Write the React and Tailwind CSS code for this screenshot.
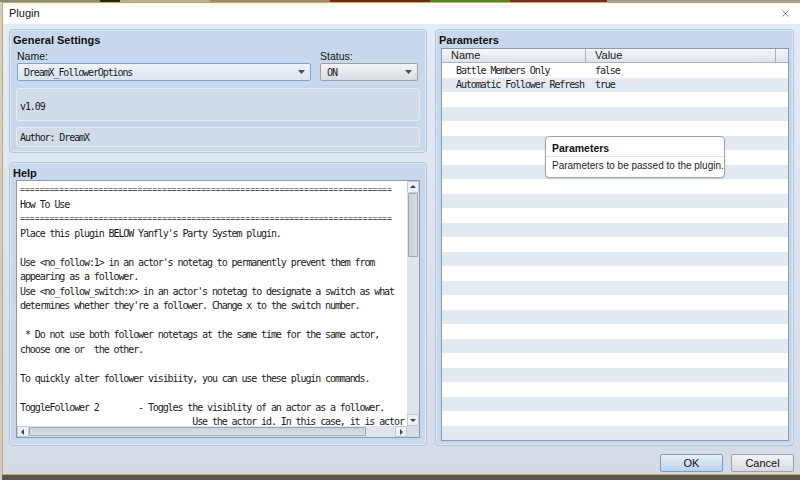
import { X } from 'lucide-react';

const mono = "font-['DejaVu_Sans_Mono',monospace] text-[10px] tracking-[-1.1px]";

const helpLines = [
  '============================================================================',
  'How To Use',
  '============================================================================',
  "Place this plugin BELOW Yanfly's Party System plugin.",
  '',
  "Use <no_follow:1> in an actor's notetag to permanently prevent them from",
  'appearing as a follower.',
  "Use <no_follow_switch:x> in an actor's notetag to designate a switch as what",
  "determines whether they're a follower. Change x to the switch number.",
  '',
  ' * Do not use both follower notetags at the same time for the same actor,',
  'choose one or  the other.',
  '',
  'To quickly alter follower visibiity, you can use these plugin commands.',
  '',
  'ToggleFollower 2        - Toggles the visiblity of an actor as a follower.',
  '                                   Use the actor id. In this case, it is actor',
];

const params = [
  { name: 'Battle Members Only', value: 'false' },
  { name: 'Automatic Follower Refresh', value: 'true' },
];

const rows = Array.from({ length: 26 }, (_, i) => params[i] || null);

const Arrow = ({ dir }) => {
  const paths = {
    up: 'M1 5 L4 2 L7 5 Z',
    down: 'M1 3 L4 6 L7 3 Z',
    left: 'M5 1 L2 4 L5 7 Z',
    right: 'M3 1 L6 4 L3 7 Z',
  };
  return (
    <svg width="8" height="8" viewBox="0 0 8 8">
      <path d={paths[dir]} fill="#3c4652" />
    </svg>
  );
};

const GroupBox = ({ title, className = '', bodyClass = '', children }) => (
  <div
    className={`flex flex-col rounded-[4px] border border-[#b2c4d9] bg-[#c7d8ec] shadow-[inset_0_0_0_1px_#dde8f5] ${className}`}
  >
    <div className="h-[16px] shrink-0 pl-[3px] pt-[4px] text-[11px] font-bold leading-[12px] text-[#101010]">
      {title}
    </div>
    <div className={`flex flex-1 flex-col ${bodyClass}`}>{children}</div>
  </div>
);

const Combo = ({ value, focused, className = '' }) => (
  <div
    className={`flex h-[18px] items-center justify-between rounded-[2px] border bg-gradient-to-b pl-[6px] pr-[5px] ${
      focused
        ? 'border-[#7ea3cc] from-[#eef3f9] to-[#d9e4f0]'
        : 'border-[#9aa3ad] from-[#f3f4f6] to-[#d8dce1]'
    } ${className}`}
  >
    <span className={`${mono} text-[#1a1a1a]`}>{value}</span>
    <svg width="7" height="4" viewBox="0 0 7 4">
      <path d="M0 0 H7 L3.5 4 Z" fill="#4a4f57" />
    </svg>
  </div>
);

export default function App() {
  return (
    <div className="flex h-[480px] w-[800px] flex-col overflow-hidden bg-[#5a554f] font-['Liberation_Sans',sans-serif]">
      <div className="flex h-[2px] shrink-0">
        <div className="w-[100px] bg-[#8a8a7a]" />
        <div className="w-[20px] bg-[#1e2a14]" />
        <div className="w-[90px] bg-[#b5b0a0]" />
        <div className="w-[120px] bg-[#9c8a72]" />
        <div className="w-[100px] bg-[#6a2a1a]" />
        <div className="w-[80px] bg-[#4a8a2a]" />
        <div className="w-[97px] bg-[#7a2a2a]" />
        <div className="flex-1 bg-[#a0a0a0]" />
      </div>
      <div className="flex flex-1">
        <div className="w-[2px] shrink-0 bg-[#cfcfc8]" />
        <div className="flex h-[473px] flex-1 flex-col border border-r-0 border-[#d7a650] bg-gradient-to-b from-[#e3ecf7] to-[#d2dbe6]">
          {/* title bar */}
          <div className="flex h-[21px] shrink-0 items-center justify-between bg-white pl-[6px] pr-[9px]">
            <span className="text-[11px] text-[#111]">Plugin</span>
            <X className="h-[11px] w-[11px] text-[#333]" strokeWidth={1.3} />
          </div>

          <div className="flex flex-1 flex-col pb-[5px] pl-[6px] pr-[6px] pt-[5px]">
            <div className="flex flex-1 gap-[8px]">
              {/* left column */}
              <div className="flex w-[418px] flex-col gap-[9px]">
                <GroupBox title="General Settings" className="h-[124px]" bodyClass="px-[6px] pb-[5px]">
                  <div className="flex gap-[9px] pl-[1px] pr-[2px]">
                    <div className="flex w-[294px] flex-col">
                      <span className="h-[17px] pt-[4px] text-[10.5px] leading-[12px] text-[#111]">Name:</span>
                      <Combo value="DreamX_FollowerOptions" focused />
                    </div>
                    <div className="flex flex-1 flex-col">
                      <span className="h-[17px] pt-[4px] text-[10.5px] leading-[12px] text-[#111]">Status:</span>
                      <Combo value="ON" />
                    </div>
                  </div>
                  <div className="mt-[7px] h-[33px] rounded-[3px] border border-[#e4ebf3] bg-[#d1dce8] pl-[3px] pt-[4px]">
                    <span className={`${mono} text-[#1a1a1a]`}>v1.09</span>
                  </div>
                  <div className="mt-[6px] flex h-[20px] items-center rounded-[3px] border border-[#e4ebf3] bg-[#d1dce8] pl-[3px]">
                    <span className={`${mono} text-[#1a1a1a]`}>Author: DreamX</span>
                  </div>
                </GroupBox>

                <GroupBox title="Help" className="flex-1" bodyClass="px-[6px] pb-[5px]">
                  <div className="mt-[1px] flex h-[258px] w-[404px] flex-col border border-[#8c9aab] bg-white">
                    <div className="flex flex-1 overflow-hidden">
                      <div className={`${mono} flex-1 overflow-hidden whitespace-pre pl-[3px] pt-[2px] leading-[14.5px] text-[#1a1a1a]`}>
                        {helpLines.map((l, i) =>
                          l.startsWith('====') ? (
                            <div key={i} className="h-[14.5px] text-[8px] tracking-[0.08px]">
                              {l}
                            </div>
                          ) : (
                            <div key={i} className="h-[14.5px]">
                              {l}
                            </div>
                          )
                        )}
                      </div>
                      <div className="flex w-[12px] flex-col bg-[#dfe5ec]">
                        <div className="flex h-[12px] items-center justify-center border border-[#c3ccd6] bg-[#eef1f4]">
                          <Arrow dir="up" />
                        </div>
                        <div className="mx-[1px] h-[64px] rounded-[1px] border border-[#9aa6b3] bg-gradient-to-r from-[#c9d2dc] to-[#d6dde5]" />
                        <div className="flex-1" />
                        <div className="flex h-[12px] items-center justify-center border border-[#c3ccd6] bg-[#eef1f4]">
                          <Arrow dir="down" />
                        </div>
                      </div>
                    </div>
                    <div className="flex h-[11px] bg-[#dfe5ec]">
                      <div className="flex w-[12px] items-center justify-center border border-[#c3ccd6] bg-[#eef1f4]">
                        <Arrow dir="left" />
                      </div>
                      <div className="my-[1px] w-[337px] rounded-[1px] border border-[#9aa6b3] bg-gradient-to-b from-[#cbd3dc] to-[#d8dfe6]" />
                      <div className="flex-1" />
                      <div className="flex w-[12px] items-center justify-center border border-[#c3ccd6] bg-[#eef1f4]">
                        <Arrow dir="right" />
                      </div>
                      <div className="w-[12px] bg-[#d5dde6]" />
                    </div>
                  </div>
                </GroupBox>
              </div>

              {/* parameters */}
              <GroupBox title="Parameters" className="relative flex-1" bodyClass="pb-[4px] pl-[5px] pr-[4px]">
                <div className="mt-[2px] flex flex-1 flex-col overflow-hidden border border-[#8c9aab] bg-white">
                  <div className="flex h-[14px] shrink-0 border-b border-[#a9b4c0] bg-gradient-to-b from-[#f4f6f9] to-[#dde3ea] text-[11px] leading-[13px] text-[#1a1a1a]">
                    <div className="w-[144px] border-r border-[#a9b4c0] pl-[9px]">Name</div>
                    <div className="w-[190px] border-r border-[#a9b4c0] pl-[9px]">Value</div>
                    <div className="flex-1" />
                  </div>
                  {rows.map((r, i) => (
                    <div
                      key={i}
                      className={`flex h-[14.5px] shrink-0 items-center ${mono} text-[#1a1a1a] ${
                        i % 2 === 0 ? 'bg-white' : 'bg-[#e3eaf1]'
                      }`}
                    >
                      {r && (
                        <>
                          <div className="w-[144px] pl-[14px]">{r.name}</div>
                          <div className="pl-[9px]">{r.value}</div>
                        </>
                      )}
                    </div>
                  ))}
                </div>

                {/* tooltip */}
                <div className="absolute left-[109px] top-[106px] w-[180px] rounded-[4px] border border-[#9ea6ae] bg-white shadow-[0_1px_2px_rgba(0,0,0,0.15)]">
                  <div className="h-[20px] border-b border-[#e2e5e8] pl-[6px] pt-[5px] text-[10.5px] font-bold leading-[12px] text-[#111]">
                    Parameters
                  </div>
                  <div className="h-[20px] pl-[6px] pt-[3px] text-[10px] leading-[12px] text-[#222]">
                    Parameters to be passed to the plugin.
                  </div>
                </div>
              </GroupBox>
            </div>

            {/* buttons */}
            <div className="mt-[8px] flex h-[18px] justify-end gap-[8px]">
              <button className="h-[18px] w-[63px] rounded-[2px] border border-[#7d9bbd] bg-gradient-to-b from-[#e6f0fa] to-[#bcd2ea] text-[11px] leading-[14px] text-[#111]">
                OK
              </button>
              <button className="h-[18px] w-[63px] rounded-[2px] border border-[#9aa3ad] bg-gradient-to-b from-[#f3f4f6] to-[#d6dadf] text-[11px] leading-[14px] text-[#111]">
                Cancel
              </button>
            </div>
          </div>
        </div>
      </div>
    </div>
  );
}
